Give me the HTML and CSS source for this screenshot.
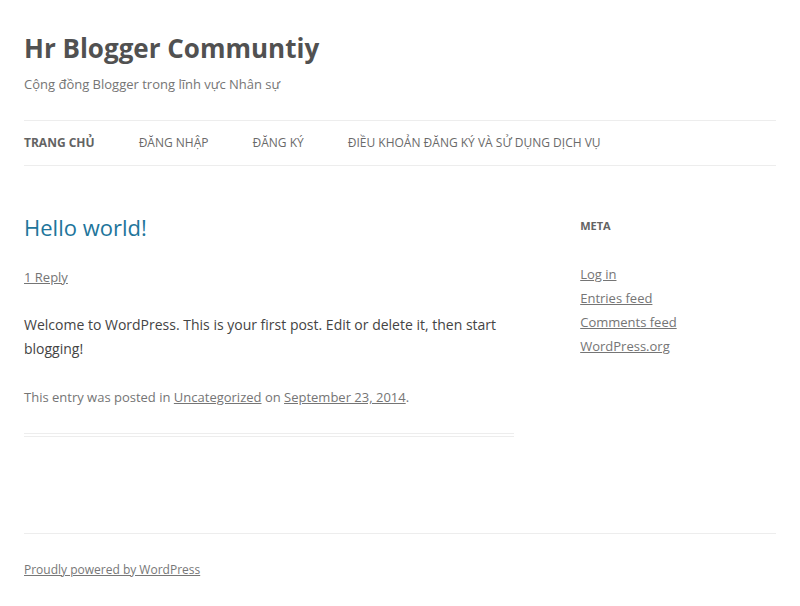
FILE: index.html
```html
<!DOCTYPE html>
<html lang="vi">
<head>
<meta charset="utf-8">
<title>Hr Blogger Communtiy</title>
<link rel="stylesheet" href="styles.css">
</head>
<body>
<div class="site">
  <header class="site-header">
    <h1 class="site-title"><a href="#">Hr Blogger Communtiy</a></h1>
    <h2 class="site-description">Cộng đồng Blogger trong lĩnh vực Nhân sự</h2>
    <nav class="main-navigation">
      <ul class="menu">
        <li class="current"><a href="#">Trang chủ</a></li>
        <li><a href="#">Đăng nhập</a></li>
        <li><a href="#">Đăng ký</a></li>
        <li><a href="#">Điều khoản đăng ký và sử dụng dịch vụ</a></li>
      </ul>
    </nav>
  </header>
  <div class="main">
    <div class="site-content">
      <article class="post">
        <header class="entry-header">
          <h1 class="entry-title"><a href="#">Hello world!</a></h1>
          <div class="comments-link"><a href="#">1 Reply</a></div>
        </header>
        <div class="entry-content">
          <p>Welcome to WordPress. This is your first post. Edit or delete it, then start blogging!</p>
        </div>
        <footer class="entry-meta">This entry was posted in <a href="#">Uncategorized</a> on <a href="#">September 23, 2014</a>.</footer>
      </article>
    </div>
    <aside class="widget-area">
      <section class="widget">
        <h3 class="widget-title">Meta</h3>
        <ul class="widget-list">
          <li><a href="#">Log in</a></li>
          <li><a href="#">Entries feed</a></li>
          <li><a href="#">Comments feed</a></li>
          <li><a href="#">WordPress.org</a></li>
        </ul>
      </section>
    </aside>
  </div>
  <footer class="site-footer">
    <a href="#">Proudly powered by WordPress</a>
  </footer>
</div>
</body>
</html>
```
FILE: styles.css
```css
html { font-size: 14px; }
body {
  margin: 0;
  background: #fff;
  color: #444;
  font-family: "Open Sans", "Liberation Sans", sans-serif;
  font-size: 14px;
  line-height: 24px;
}
.site { padding: 0 24px; }
.site-header { padding: 24px 0; }
.site-title {
  margin: 0;
  font-size: 26px;
  line-height: 48px;
  font-weight: bold;
}
.site-title a { color: #515151; text-decoration: none; }
.site-description {
  margin: 0;
  font-size: 13px;
  line-height: 24px;
  font-weight: normal;
  color: #757575;
}
.main-navigation {
  margin-top: 24px;
  border-top: 1px solid #ededed;
  border-bottom: 1px solid #ededed;
}
.menu {
  list-style: none;
  margin: 0;
  padding: 0;
  display: flex;
  gap: 44px;
}
.menu li { font-size: 12px; }
.menu a {
  display: block;
  color: #6a6a6a;
  line-height: 44.3px;
  text-transform: uppercase;
  text-decoration: none;
  white-space: nowrap;
}
.menu .current a { color: #636363; font-weight: bold; }
.main {
  display: flex;
  justify-content: space-between;
  align-items: flex-start;
}
.site-content { width: 65.104%; margin-top: 24px; }
.post {
  border-bottom: 4px double #ededed;
  padding-bottom: 24px;
  margin-bottom: 72px;
}
.entry-header { margin-bottom: 24px; }
.entry-title {
  margin: 0;
  font-size: 22px;
  line-height: 26.4px;
  font-weight: normal;
}
.entry-title a { color: #21759b; text-decoration: none; }
.comments-link {
  margin-top: 24px;
  font-size: 13px;
  line-height: 24px;
}
.comments-link a, .entry-meta a { color: #757575; }
.entry-content p { margin: 0 0 24px; }
.entry-meta {
  font-size: 13px;
  line-height: 24px;
  color: #757575;
}
.widget-area { width: 26.04%; margin-top: 24px; }
.widget { margin-bottom: 48px; }
.widget-title {
  margin: 0 0 24px;
  font-size: 11px;
  line-height: 24px;
  font-weight: bold;
  text-transform: uppercase;
  color: #636363;
}
.widget-list { list-style: none; margin: 0; padding: 0; }
.widget-list li { font-size: 13px; line-height: 24px; }
.widget-list a { color: #757575; }
.site-footer {
  border-top: 1px solid #ededed;
  margin-top: 24px;
  padding: 24px 0;
  font-size: 12px;
  line-height: 24px;
}
.site-footer a { color: #777; }
```
